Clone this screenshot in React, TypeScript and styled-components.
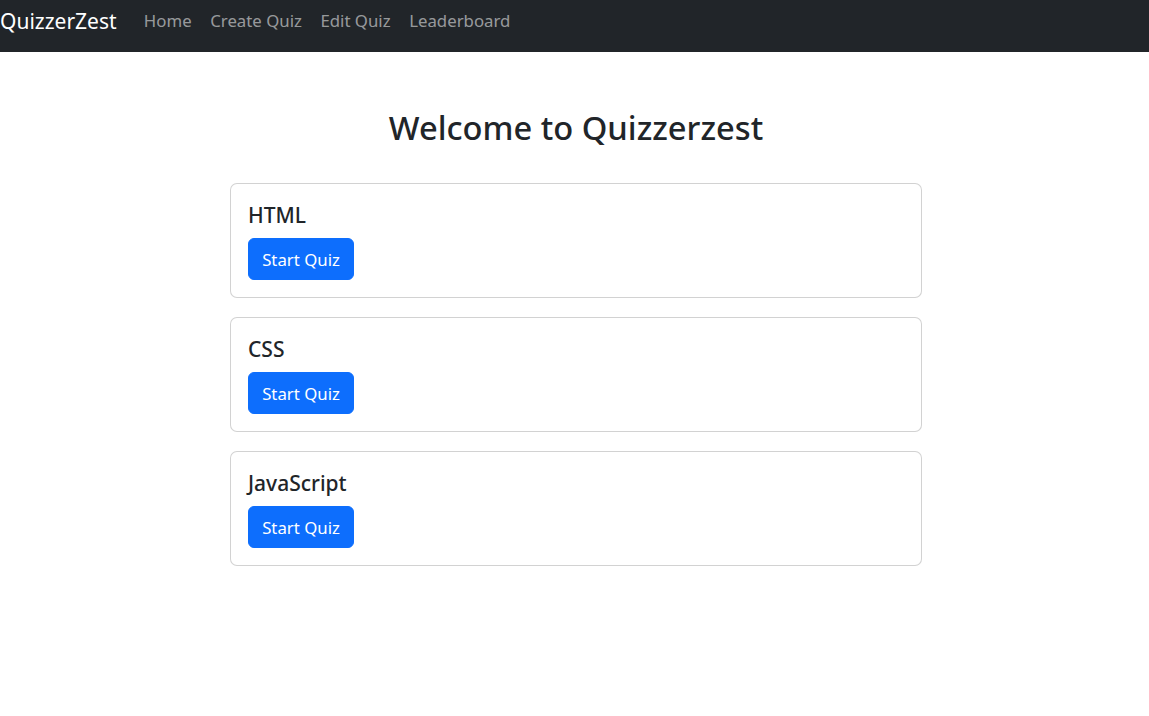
import React from "react";
import styled, { createGlobalStyle } from "styled-components";

const Global = createGlobalStyle`
  html, body { margin: 0; padding: 0; background: #fff; }
  body {
    font-family: "Segoe UI", "Noto Sans", "Open Sans", sans-serif;
    color: #212529;
    font-size: 16.8px;
    line-height: 1.5;
  }
  * { box-sizing: border-box; }
`;

const Navbar = styled.nav`
  height: 52px;
  background: #212529;
  display: flex;
  align-items: center;
  padding: 0 0 10px;
`;

const Brand = styled.a`
  color: #fff;
  font-size: 21px;
  text-decoration: none;
  margin-right: 18px;
  line-height: 1;
`;

const NavList = styled.ul`
  display: flex;
  list-style: none;
  margin: 0;
  padding: 0;
`;

const NavLink = styled.a`
  color: rgba(255, 255, 255, 0.55);
  font-size: 16.8px;
  text-decoration: none;
  padding: 0 9.3px;
  line-height: 1;
`;

const Main = styled.main`
  width: 695px;
  margin: 0 auto;
  padding: 56px 0 0 3px;
`;

const Title = styled.h1`
  text-align: center;
  font-size: 32.7px;
  font-weight: 500;
  line-height: 1.2;
  margin: 0 0 36px;
`;

const Card = styled.div`
  border: 1px solid rgba(0, 0, 0, 0.175);
  border-radius: 7px;
  padding: 19px 17px 0;
  margin-bottom: 19px;
  height: 115px;
  background: #fff;
`;

const CardTitle = styled.h5`
  font-size: 21px;
  font-weight: 500;
  line-height: 1.2;
  margin: 0 0 10px;
`;

const Button = styled.button`
  background: #0d6efd;
  color: #fff;
  border: 1px solid #0d6efd;
  border-radius: 6px;
  font-family: inherit;
  font-size: 16.8px;
  line-height: 1.5;
  padding: 6px 13px;
  height: 42px;
  width: 106px;
  cursor: pointer;
`;

const quizzes = ["HTML", "CSS", "JavaScript"];

export default function App() {
  return (
    <>
      <Global />
      <Navbar>
        <Brand href="#">QuizzerZest</Brand>
        <NavList>
          {["Home", "Create Quiz", "Edit Quiz", "Leaderboard"].map((l) => (
            <li key={l}>
              <NavLink href="#">{l}</NavLink>
            </li>
          ))}
        </NavList>
      </Navbar>
      <Main>
        <Title>Welcome to Quizzerzest</Title>
        {quizzes.map((q) => (
          <Card key={q}>
            <CardTitle>{q}</CardTitle>
            <Button>Start Quiz</Button>
          </Card>
        ))}
      </Main>
    </>
  );
}
